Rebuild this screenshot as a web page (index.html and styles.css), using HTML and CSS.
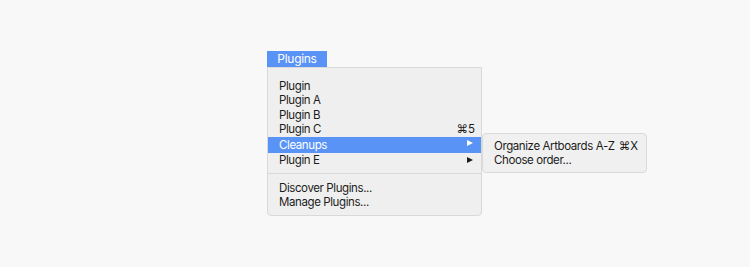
FILE: index.html
```html
<!DOCTYPE html>
<html lang="en">
<head>
    <meta charset="UTF-8">
    <title>Plugins menu</title>
    <link rel="stylesheet" href="styles.css">
</head>
<body>

    <!-- Menu bar with the open Plugins menu -->
    <div class="stage">
        <div class="menu-wrap">
            <div class="menu-title">Plugins</div>

            <div class="menu">
                <div class="menu-item">Plugin</div>
                <div class="menu-item">Plugin A</div>
                <div class="menu-item">Plugin B</div>
                <div class="menu-item">Plugin C <span class="shortcut">⌘5</span></div>
                <div class="menu-item active">
                    Cleanups <span class="arrow"></span>

                    <!-- Submenu -->
                    <div class="submenu">
                        <div class="menu-item">Organize Artboards A-Z <span class="shortcut">⌘X</span></div>
                        <div class="menu-item">Choose order...</div>
                    </div>
                </div>
                <div class="menu-item">Plugin E <span class="arrow down"></span></div>

                <div class="separator"></div>

                <div class="menu-item">Discover Plugins...</div>
                <div class="menu-item">Manage Plugins...</div>
            </div>
        </div>
    </div>

</body>
</html>
```

FILE: styles.css
```css
body {
    font-family: Inter, "Noto Sans", sans-serif;
    font-size: 11.5px;
    letter-spacing: -0.4px;
    background-color: #f8f8f8;
    color: #1c1c1c;
    margin: 0;
}

.stage {
    padding: 51px 0 0 267px;
}

.menu-wrap {
    width: 215px;
}

.menu-title {
    width: 60px;
    height: 16px;
    line-height: 16px;
    background-color: #5a93f6;
    color: white;
    text-align: center;
    font-size: 12px;
    letter-spacing: -0.3px;
}

.menu {
    background-color: #efefef;
    border: 1px solid #d9d9d9;
    border-radius: 0 0 4px 4px;
    padding: 10.5px 0 5.5px;
}

.menu-item {
    position: relative;
    display: flex;
    justify-content: space-between;
    align-items: center;
    height: 14.5px;
    padding: 0 6px 0 11px;
    white-space: nowrap;
}

.menu-item.active {
    height: 16px;
    background-color: #5a93f6;
    color: white;
}

.shortcut {
    letter-spacing: 0;
}

.arrow {
    width: 0;
    height: 0;
    margin-right: 2px;
    margin-top: -4px;
    border-top: 3.5px solid transparent;
    border-bottom: 3.5px solid transparent;
    border-left: 6px solid white;
}

.arrow.down {
    border-left-color: #1c1c1c;
    margin-top: 1px;
}

.separator {
    height: 1px;
    background-color: #d9d9d9;
    margin: 6px 0 6.25px;
}

.submenu {
    position: absolute;
    left: 100%;
    top: -3.5px;
    margin-left: 1px;
    width: 163px;
    background-color: #f0f0f0;
    border: 1px solid #dadada;
    border-radius: 4px;
    padding: 5px 0;
    color: #1c1c1c;
}

.submenu .menu-item {
    height: 14px;
    padding: 0 8px 0 11px;
}
```
